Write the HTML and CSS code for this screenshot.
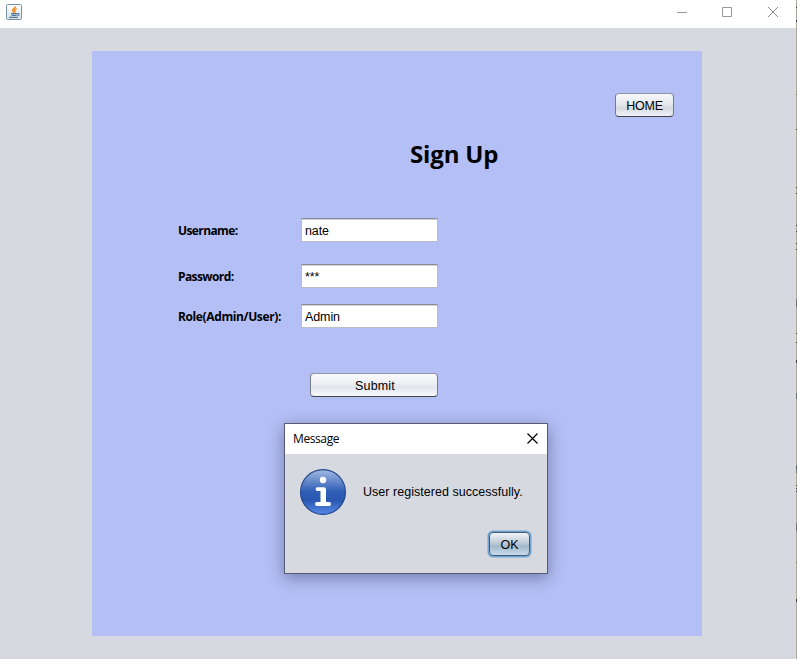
FILE: index.html
```html
<!DOCTYPE html>
<html lang="en">
<head>
<meta charset="utf-8">
<title>Sign Up</title>
<link rel="stylesheet" href="styles.css">
</head>
<body>
<div class="screen">
  <div class="window">
    <header class="titlebar">
      <svg class="java" width="16" height="16" viewBox="0 0 16 16">
        <defs><linearGradient id="jb" x2="0" y2="1"><stop stop-color="#fff"/><stop offset="1" stop-color="#d9e0e6"/></linearGradient></defs>
        <rect x=".5" y=".5" width="15" height="15" rx="1" fill="url(#jb)" stroke="#7890a4"/>
        <path d="M9.600 2.300C9.800 4 6 4.800 6.600 6.600L8 8.700M10.800 4.600C8.400 5.500 8 6.200 9 7.200L8.600 8.800" fill="none" stroke="#f08a24" stroke-width="1.400"/>
        <path d="M5 9.600h6.500M5.500 11.400h5.200M3.200 13.400h8.600M11.500 9.600c2.200-.4 2.200 1.400 0 2" fill="none" stroke="#52789a" stroke-width="1.100"/>
      </svg>
      <svg class="controls" width="102" height="11" viewBox="0 0 102 11" fill="none" stroke="#999">
        <path d="M0 5.500h10M45.500.5h9v9h-9z"/><path d="M91 0l10 10M101 0l-10 10" stroke="#888"/>
      </svg>
    </header>
    <main class="panel">
      <button class="btn home">HOME</button>
      <h1>Sign Up</h1>
      <form class="form">
        <label for="u">Username:</label><input id="u" value="nate">
        <label for="p">Password:</label><input id="p" value="***">
        <label class="role" for="r">Role(Admin/User):</label><input id="r" value="Admin">
      </form>
      <button class="btn submit">Submit</button>
    </main>
  </div>
  <svg class="edge" width="1" height="659" viewBox="0 0 1 659">
    <path fill="#aaa898" d="M0 0h1v659H0z"/>
    <path fill="#3c3f3b" d="M0 7h1v1H0zM0 20h1v2H0zM0 129h1v1H0zM0 187h1v1H0zM0 193h1v1H0zM0 225h1v1H0zM0 231h1v1H0zM0 243h1v1H0zM0 249h1v1H0zM0 333h1v1H0zM0 342h1v1H0zM0 360h1v3H0zM0 467h1v1H0zM0 485h1v1H0zM0 488h1v1H0zM0 491h1v1H0zM0 599h1v3H0z"/>
    <path fill="#737570" d="M0 94h1v1H0zM0 299h1v8H0zM0 393h1v6H0zM0 465h1v2H0zM0 468h1v5H0zM0 523h1v8H0zM0 562h1v1H0z"/>
  </svg>
  <section class="dialog" role="dialog">
    <div class="dialog-title"><span>Message</span>
      <svg width="11" height="11" viewBox="0 0 11 11" fill="none" stroke="#000" stroke-width="1.200"><path d="M.5.5l10 10M10.500.5l-10 10"/></svg>
    </div>
    <div class="dialog-body">
      <div class="message">
        <svg width="46" height="46" viewBox="0 0 46 46">
          <defs><linearGradient id="ib" x2="0" y2="1"><stop stop-color="#a3bae2"/><stop offset=".48" stop-color="#315fb8"/><stop offset=".68" stop-color="#2856b0"/><stop offset="1" stop-color="#598bea"/></linearGradient></defs>
          <circle cx="23" cy="23" r="22.400" fill="url(#ib)" stroke="#21458c" stroke-width="1.200"/>
          <circle cx="23" cy="11" r="3.200" fill="#fff"/>
          <path d="M17.500 18.200H24a2 2 0 0 1 2 2V33h3a2 2 0 0 1 0 4H17a2 2 0 0 1 0-4h3.500V22h-3a1.900 1.900 0 0 1 0-3.800z" fill="#fff"/>
        </svg>
        <span>User registered successfully.</span>
      </div>
      <button class="btn ok">OK</button>
    </div>
  </section>
</div>
</body>
</html>
```
FILE: styles.css
```css
* { box-sizing: border-box; }
body { margin: 0; }
.screen {
  display: flex;
  position: relative;
  width: 797px;
  height: 659px;
  overflow: hidden;
  font: 12px "Liberation Sans", Arial, sans-serif;
  color: #000;
}
.window { width: 796px; background: #d6d9e0; }
.titlebar {
  display: flex;
  justify-content: space-between;
  align-items: flex-start;
  height: 28px;
  padding: 4px 17px 0 6px;
  background: #fff;
}
.controls { margin-top: 3px; }
.panel {
  display: flex;
  flex-direction: column;
  width: 610px;
  height: 585px;
  margin: 23px 0 0 92px;
  padding-top: 42px;
  background: #b4bff5;
}
.btn {
  height: 24px;
  padding: 2px 0 0;
  border: 1px solid #777b87;
  border-top-color: #8f93a2;
  border-bottom-color: #3f424b;
  border-radius: 4px;
  background: linear-gradient(#fbfbfd, #eef0f4 40%, #e2e6ec 60%, #f7f9fd);
  font: 12.5px/20px "Liberation Sans", Arial, sans-serif;
  color: #000;
}
.home { width: 59px; margin-left: 523px; letter-spacing: -.2px; background: linear-gradient(#f8f9fb, #e4e7ec 45%, #d7dbe0 65%, #eff2f8); }
h1 {
  margin: 21px 0 0 318px;
  font: bold 24px/32px "Open Sans", "Noto Sans", sans-serif;
  letter-spacing: -.15px;
}
.form {
  display: grid;
  grid-template-columns: 123px 137px;
  grid-template-rows: 30px 24px 24px;
  row-gap: 16px;
  margin: 48px 0 0 86px;
}
.form label {
  padding-top: 1px;
  font: bold 12px/24px "Open Sans", "Noto Sans", sans-serif;
  letter-spacing: -.6px;
  white-space: nowrap;
}
.form .role { letter-spacing: -.38px; }
.form input {
  width: 137px;
  height: 24px;
  padding: 1px 3px 0;
  border: 1px solid #b9bcc9;
  border-top: 1px solid #888b94;
  outline: 0;
  background: #fff;
  box-shadow: inset 0 1px #d0d1d4;
  font: inherit;
  font-size: 12.5px;
  letter-spacing: -.1px;
  color: #000;
}
.submit { width: 128px; margin: 45px 0 0 218px; padding-left: 2px; letter-spacing: .15px; }
.dialog {
  position: absolute;
  left: 284px;
  top: 423px;
  width: 264px;
  height: 151px;
  border: 1px solid #565a72;
  background: #d6d9e0;
  box-shadow: 0 4px 15px rgba(25, 30, 70, .42);
}
.dialog-title {
  display: flex;
  justify-content: space-between;
  align-items: center;
  height: 30px;
  padding: 0 9px 0 8px;
  background: #fff;
  font: 12px/28px "Open Sans", "Noto Sans", sans-serif;
  letter-spacing: -.4px;
}
.dialog-title span { margin-bottom: 1px; }
.dialog-title svg { margin-bottom: 2px; }
.dialog-body { display: flex; flex-direction: column; padding: 15px 17px 0 15px; }
.message { display: flex; align-items: center; gap: 17px; height: 46px; font-size: 12.5px; letter-spacing: .03px; white-space: nowrap; }
.ok {
  align-self: flex-end;
  width: 41px;
  margin-top: 17px;
  border-color: #3d5c7b;
  background: linear-gradient(#f0f4f8, #bdcad6 45%, #a3b8ca 60%, #c8dbee);
  box-shadow: 0 0 0 1.500px #73a4d1;
}
```
